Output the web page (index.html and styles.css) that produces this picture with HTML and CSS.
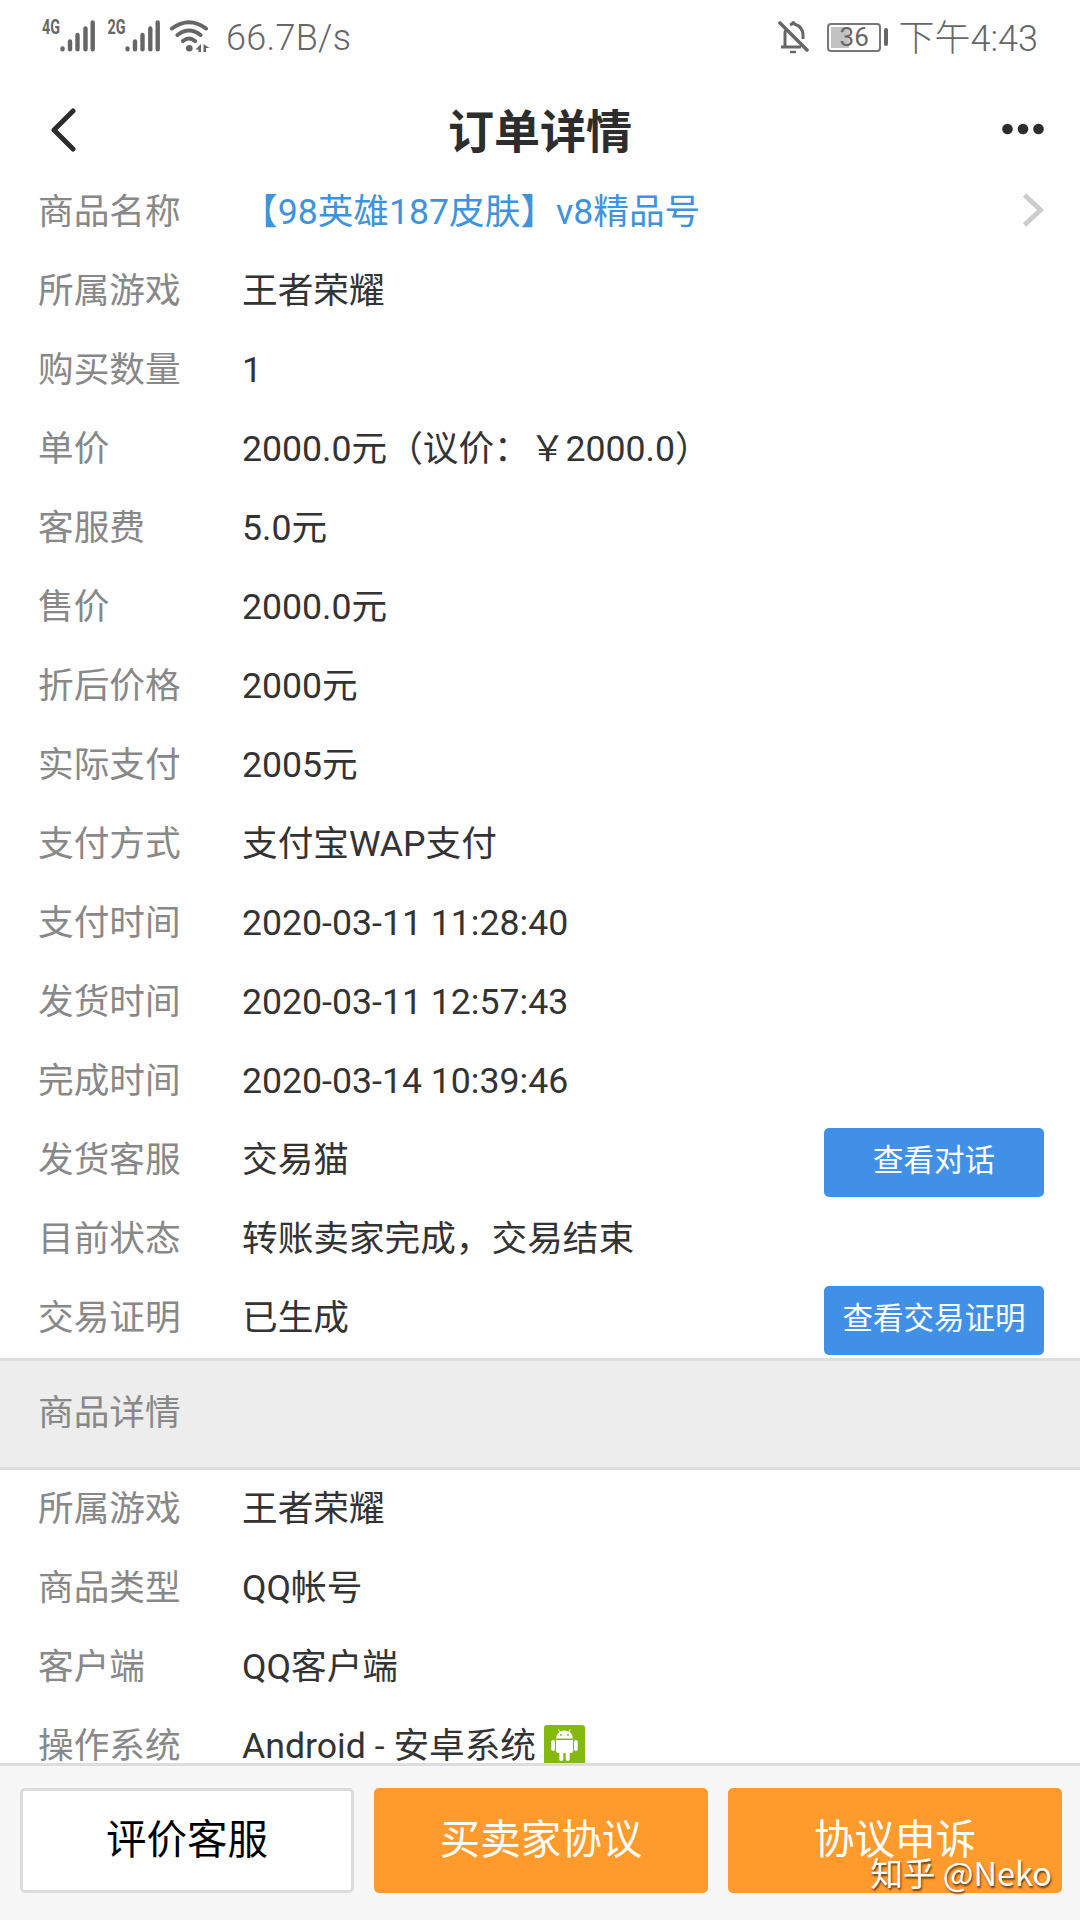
FILE: index.html
```html
<!DOCTYPE html>
<html lang="zh-CN">
<head>
    <meta charset="UTF-8">
    <meta name="viewport" content="width=device-width, initial-scale=1.0">
    <title>订单详情</title>
    <link rel="stylesheet" href="styles.css">
</head>
<body>
    <div class="status-bar">
        <div class="status-left">
            <svg class="signals" width="170" height="40" viewBox="0 0 170 40">
                <g stroke="#666" stroke-width="4.4" stroke-linecap="round" fill="none">
                    <path d="M22.5 31.2V30.4M30 31.2V23.5M37.5 31.2V17M45.5 31.2V10.5M52.7 31.2V4.500"/>
                    <path d="M87.5 31.2V30.4M95 31.2V23.5M102.5 31.2V17M110.3 31.2V10.5M117.7 31.2V4.500"/>
                </g>
                <g stroke="#666" stroke-width="4" stroke-linecap="round" fill="none">
                    <path d="M132 10.5Q149 -2 166 10.5M137.5 17Q149 8 160.5 17M143 23Q149 18 155 23"/>
                </g>
                <circle cx="149.3" cy="30.3" r="3.3" fill="#666"/>
                <path d="M161 26V34H158.500V31.500H155.500ZM163.5 26L169.500 30H166V34H163.5Z" fill="#666"/>
                <g class="net-type">
                    <text x="2" y="16" textLength="18" lengthAdjust="spacingAndGlyphs">4G</text>
                    <text x="67.5" y="16" textLength="18" lengthAdjust="spacingAndGlyphs">2G</text>
                </g>
            </svg>
            <span class="speed">66.7B/s</span>
        </div>
        <div class="status-right">
            <svg width="32" height="36" viewBox="0 0 32 36" fill="none" stroke="#666" stroke-width="3">
                <path d="M2 4L29 31" stroke-width="3.6" stroke-linecap="round"/>
                <path d="M3 28H23M7 27V14Q7 12 8 11M12 6Q14 5 14 5Q15 2 16.5 5Q25 8 25 16V20"/>
                <path d="M12 33H18" stroke-width="2.4"/>
            </svg>
            <div class="battery">
                <div class="battery-body"><span class="battery-level"></span><span class="battery-text">36</span></div>
                <span class="battery-tip"></span>
            </div>
            <span class="clock">下午4:43</span>
        </div>
    </div>

    <div class="header">
        <svg class="back" width="26" height="44" viewBox="0 0 26 44">
            <path d="M23 3L4 22L23 41" fill="none" stroke="#2d2d2d" stroke-width="5" stroke-linecap="round" stroke-linejoin="round"/>
        </svg>
        <h1>订单详情</h1>
        <svg class="more" width="42" height="12" viewBox="0 0 42 12" fill="#2d2d2d">
            <circle cx="5.5" cy="6" r="5.3"/>
            <circle cx="21" cy="6" r="5.3"/>
            <circle cx="36.5" cy="6" r="5.3"/>
        </svg>
    </div>

    <div class="content">
        <div class="list">
            <div class="row">
                <span class="label">商品名称</span><span class="value link">【98英雄187皮肤】v8精品号</span>
                <svg class="arrow" width="22" height="36" viewBox="0 0 22 36">
                    <path d="M2.5 3L18.5 18L2.5 33" fill="none" stroke="#ccc" stroke-width="4.8"/>
                </svg>
            </div>
            <div class="row"><span class="label">所属游戏</span><span class="value">王者荣耀</span></div>
            <div class="row"><span class="label">购买数量</span><span class="value">1</span></div>
            <div class="row"><span class="label">单价</span><span class="value">2000.0元（议价：￥2000.0）</span></div>
            <div class="row"><span class="label">客服费</span><span class="value">5.0元</span></div>
            <div class="row"><span class="label">售价</span><span class="value">2000.0元</span></div>
            <div class="row"><span class="label">折后价格</span><span class="value">2000元</span></div>
            <div class="row"><span class="label">实际支付</span><span class="value">2005元</span></div>
            <div class="row"><span class="label">支付方式</span><span class="value">支付宝WAP支付</span></div>
            <div class="row"><span class="label">支付时间</span><span class="value">2020-03-11 11:28:40</span></div>
            <div class="row"><span class="label">发货时间</span><span class="value">2020-03-11 12:57:43</span></div>
            <div class="row"><span class="label">完成时间</span><span class="value">2020-03-14 10:39:46</span></div>
            <div class="row"><span class="label">发货客服</span><span class="value">交易猫</span><button class="btn-small">查看对话</button></div>
            <div class="row"><span class="label">目前状态</span><span class="value">转账卖家完成，交易结束</span></div>
            <div class="row"><span class="label">交易证明</span><span class="value">已生成</span><button class="btn-small">查看交易证明</button></div>
        </div>

        <div class="section-title">商品详情</div>

        <div class="list list-goods">
            <div class="row"><span class="label">所属游戏</span><span class="value">王者荣耀</span></div>
            <div class="row"><span class="label">商品类型</span><span class="value">QQ帐号</span></div>
            <div class="row"><span class="label">客户端</span><span class="value">QQ客户端</span></div>
            <div class="row">
                <span class="label">操作系统</span><span class="value">Android - 安卓系统</span>
                <svg class="android" width="41" height="41" viewBox="0 0 41 41">
                    <rect width="41" height="41" rx="3" fill="#84b90f"/>
                    <g fill="#fff">
                        <path d="M12 13.5A8.5 8 0 0 1 29 13.5Z"/>
                        <path d="M12 15H29V26Q29 28 27 28H14Q12 28 12 26Z"/>
                        <rect x="7.3" y="15" width="3.7" height="11" rx="1.8"/>
                        <rect x="30" y="15" width="3.7" height="11" rx="1.8"/>
                        <rect x="15.3" y="25" width="4" height="11" rx="2"/>
                        <rect x="21.7" y="25" width="4" height="11" rx="2"/>
                    </g>
                    <path d="M14.5 4.5L17 8M26.5 4.5L24 8" stroke="#fff" stroke-width="1"/>
                    <circle cx="17" cy="10" r="0.9" fill="#84b90f"/>
                    <circle cx="24" cy="10" r="0.9" fill="#84b90f"/>
                </svg>
            </div>
        </div>
    </div>

    <div class="footer">
        <button class="btn">评价客服</button>
        <button class="btn btn-orange">买卖家协议</button>
        <button class="btn btn-orange">协议申诉</button>
        <span class="watermark">知乎 @Neko</span>
    </div>
</body>
</html>
```
FILE: styles.css
```css
* {
    box-sizing: border-box;
}
body {
    display: flex;
    flex-direction: column;
    width: 1080px;
    height: 1920px;
    margin: 0;
    overflow: hidden;
    background: #fefefe;
    color: #333;
    font-family: Roboto, "Noto Sans CJK SC", sans-serif;
    font-size: 35.65px;
    text-spacing-trim: space-all;
}
svg {
    display: block;
    flex: none;
}
.status-bar {
    display: flex;
    justify-content: space-between;
    height: 74px;
    padding: 0 42px 0 40px;
    color: #666;
}
.status-left,
.status-right {
    display: flex;
    align-items: center;
}
.signals {
    margin-top: 2px;
}
.net-type {
    fill: #666;
    font-size: 20px;
    font-weight: 700;
}
.speed {
    margin: 2px 0 0 16px;
    font-size: 36px;
    font-weight: 300;
    letter-spacing: 0.3px;
}
.status-right svg {
    margin-right: 1px;
}
.battery {
    display: flex;
    align-items: center;
    margin: 0 11px 0 16px;
}
.battery-body {
    display: flex;
    align-items: center;
    width: 54px;
    height: 29px;
    padding: 2px;
    border: 2px solid #777;
    border-radius: 4px;
    font-size: 26px;
}
.battery-level {
    width: 18px;
    height: 21px;
    background: #c2c2c2;
}
.battery-text {
    margin-left: -9px;
    line-height: 1;
}
.battery-tip {
    width: 4px;
    height: 18px;
    margin-left: 3px;
    border-radius: 2px;
    background: #666;
}
.clock {
    margin-bottom: 4px;
    font-size: 36px;
    font-weight: 300;
}
.header {
    display: flex;
    align-items: center;
    justify-content: space-between;
    height: 98px;
    padding: 14px 36px 0 50px;
}
.back {
    margin-right: 2px;
}
.header h1 {
    margin: 4px 0 0;
    color: #2d2d2d;
    font-size: 46px;
    font-weight: 700;
    line-height: 66px;
}
.more {
    margin-top: -2px;
}
.content {
    flex: 1;
    min-height: 0;
    overflow: hidden;
}
.list {
    padding: 0 36px 0 38px;
}
.list-goods {
    margin-top: -1px;
}
.row {
    display: flex;
    align-items: center;
    height: 79px;
    line-height: 52px;
    white-space: nowrap;
}
.label {
    width: 204px;
    color: #888;
}
.link {
    color: #3d94dd;
}
.arrow,
.btn-small {
    margin-left: auto;
}
.arrow {
    margin-bottom: 4px;
}
.btn-small {
    width: 220px;
    height: 69px;
    margin-top: 6px;
    padding: 0 0 9px;
    border: none;
    border-radius: 5px;
    background: #4190e8;
    color: #fff;
    font-family: inherit;
    font-size: 30.5px;
}
.section-title {
    height: 112px;
    margin-top: 1px;
    padding-left: 38px;
    border-top: 3px solid #ddd;
    border-bottom: 3px solid #ddd;
    background: #ededed;
    color: #888;
    line-height: 104px;
}
.android {
    margin-left: 8px;
}
.footer {
    display: flex;
    position: relative;
    gap: 20px;
    height: 157px;
    padding: 22px 18px 27px 20px;
    border-top: 3px solid #ddd;
    background: #f7f7f7;
}
.btn {
    flex: 1;
    padding: 0 0 8px;
    border: 3px solid #dcdcdc;
    border-radius: 5px;
    background: #fff;
    color: #000;
    font-family: inherit;
    font-size: 40.5px;
}
.btn-orange {
    border-color: #ff9a2c;
    background: #ff9a2c;
    color: #fff;
}
.watermark {
    position: absolute;
    right: 28px;
    bottom: 23px;
    color: #fff;
    font-family: "Noto Sans CJK SC", sans-serif;
    font-size: 32.5px;
    line-height: 50px;
    text-shadow: 1px 2px 2px rgba(0, 0, 0, 0.6);
}
```
